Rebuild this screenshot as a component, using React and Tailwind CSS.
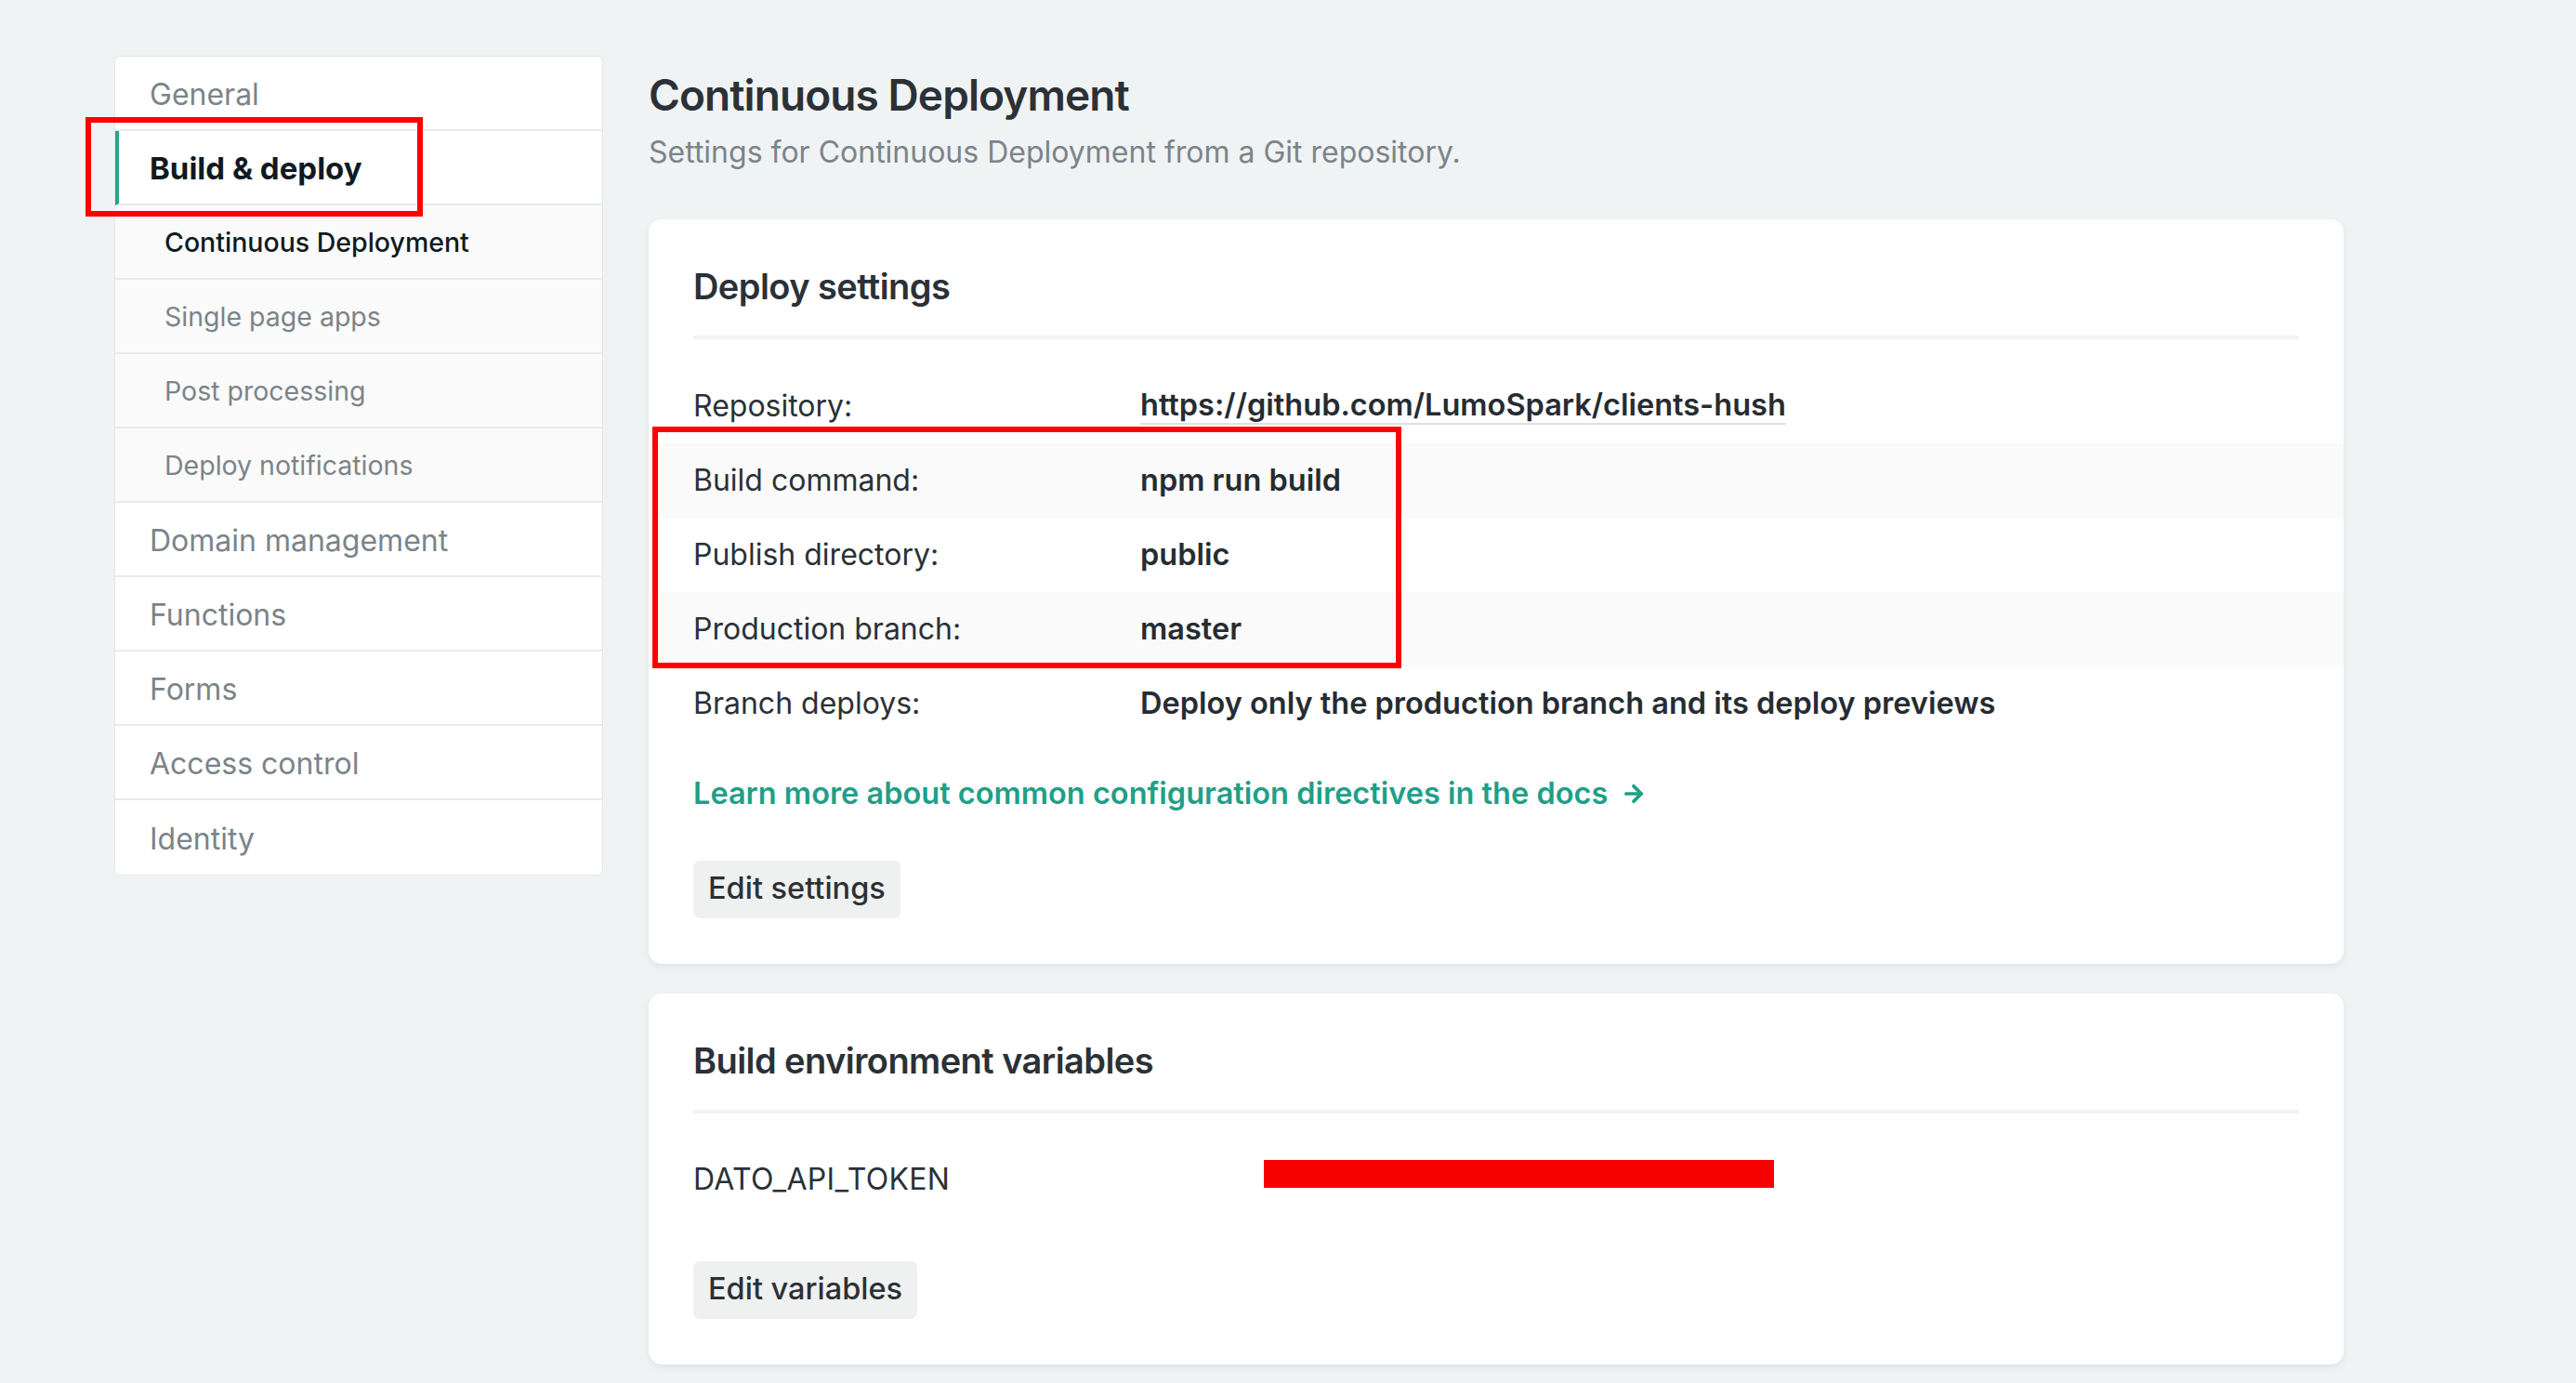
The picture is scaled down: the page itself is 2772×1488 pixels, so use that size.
import React from 'react';
import { ArrowRight } from 'lucide-react';

const navTop = [
  { label: 'General' },
  { label: 'Build & deploy', active: true },
];

const subNav = [
  { label: 'Continuous Deployment', active: true },
  { label: 'Single page apps' },
  { label: 'Post processing' },
  { label: 'Deploy notifications' },
];

const navBottom = ['Domain management', 'Functions', 'Forms', 'Access control', 'Identity'];

const deployRows = [
  { label: 'Repository:', value: 'https://github.com/LumoSpark/clients-hush', link: true },
  { label: 'Build command:', value: 'npm run build', striped: true },
  { label: 'Publish directory:', value: 'public' },
  { label: 'Production branch:', value: 'master', striped: true },
  { label: 'Branch deploys:', value: 'Deploy only the production branch and its deploy previews' },
];

const Sidebar = () => (
  <nav className="w-[526px] shrink-0 bg-white border border-[#e3e7e9] rounded-[6px] overflow-hidden">
    {navTop.map((item) => (
      <div
        key={item.label}
        className={`h-[80px] flex items-center pt-[3px] border-b-2 border-[#e8eaec] ${
          item.active
            ? 'border-l-[4px] border-l-[#2aa38b] pl-[33px] text-[33px] font-bold text-[#0f1a20]'
            : 'pl-[37px] text-[32px] text-[#7b8489]'
        }`}
      >
        {item.label}
      </div>
    ))}
    {subNav.map((item) => (
      <div
        key={item.label}
        className={`h-[80px] flex items-center pt-[2px] pl-[53px] bg-[#fafafa] border-b-2 border-[#e8eaec] text-[28.5px] ${
          item.active ? 'font-medium text-[#0f1a20]' : 'text-[#7b8489]'
        }`}
      >
        {item.label}
      </div>
    ))}
    {navBottom.map((label, i) => (
      <div
        key={label}
        className={`h-[80px] flex items-center pt-[3px] pl-[37px] text-[32px] text-[#7b8489] ${
          i < navBottom.length - 1 ? 'border-b-2 border-[#e8eaec]' : ''
        }`}
      >
        {label}
      </div>
    ))}
  </nav>
);

const Card = ({ title, children }) => (
  <section className="bg-white rounded-[14px] shadow-[0_3px_6px_rgba(30,50,60,0.08)] px-[48px] pt-[44px] pb-[49px]">
    <h2 className="text-[38px] leading-[56px] font-semibold tracking-[-0.015em] text-[#2b3136]">{title}</h2>
    <div className="mt-[25px] h-[4px] bg-[#f2f2f6]" />
    {children}
  </section>
);

const Button = ({ children }) => (
  <button className="h-[62px] px-[16px] rounded-[7px] bg-[#eff1f1] text-[32.5px] font-medium text-[#2b3035]">
    {children}
  </button>
);

export default function App() {
  return (
    <div className="relative min-h-screen bg-[#f0f3f4] font-['Inter',sans-serif] text-[#2b3136] overflow-hidden">
      <div className="flex items-start pl-[123px] pt-[60px] gap-[49px]">
        <Sidebar />

        <main className="w-[1824px] shrink-0">
          <h1 className="text-[46px] leading-[56px] mt-[14px] font-semibold tracking-[-0.02em] text-[#2b3136]">
            Continuous Deployment
          </h1>
          <p className="mt-[13px] text-[32px] leading-[42px] text-[#7b8489]">
            Settings for Continuous Deployment from a Git repository.
          </p>

          <div className="mt-[51px] flex flex-col gap-[32px]">
            <Card title="Deploy settings">
              <div className="mt-[32px]">
                {deployRows.map((row) => (
                  <div
                    key={row.label}
                    className={`-mx-[48px] px-[48px] h-[80px] flex items-center ${
                      row.striped ? 'bg-[#fafafa]' : ''
                    }`}
                  >
                    <span className="w-[481px] shrink-0 text-[32px] text-[#2b3136]">{row.label}</span>
                    <span
                      className={`text-[32.5px] font-semibold text-[#262c31] ${
                        row.link ? 'border-b-2 border-[#dde1e3] leading-[38px]' : ''
                      }`}
                    >
                      {row.value}
                    </span>
                  </div>
                ))}
              </div>
              <a className="mt-[33px] flex items-center gap-[14px] text-[32.5px] font-semibold text-[#1f9f87]">
                Learn more about common configuration directives in the docs
                <ArrowRight size={28} strokeWidth={3.2} />
              </a>
              <div className="mt-[47px]">
                <Button>Edit settings</Button>
              </div>
            </Card>

            <Card title="Build environment variables">
              <div className="mt-[51px] flex items-center h-[40px]">
                <span className="w-[614px] shrink-0 text-[32px] text-[#2b3136] tracking-[0.01em]">DATO_API_TOKEN</span>
                <span className="w-[549px] h-[30px] bg-[#f70000] -mt-[12px]" />
              </div>
              <div className="mt-[68px]">
                <Button>Edit variables</Button>
              </div>
            </Card>
          </div>
        </main>
      </div>

      {/* annotation boxes */}
      <div className="absolute left-[92px] top-[126px] w-[363px] h-[107px] border-[6px] border-[#ff0000]" />
      <div className="absolute left-[702px] top-[459px] w-[806px] h-[260px] border-[6px] border-[#ff0000]" />
    </div>
  );
}
